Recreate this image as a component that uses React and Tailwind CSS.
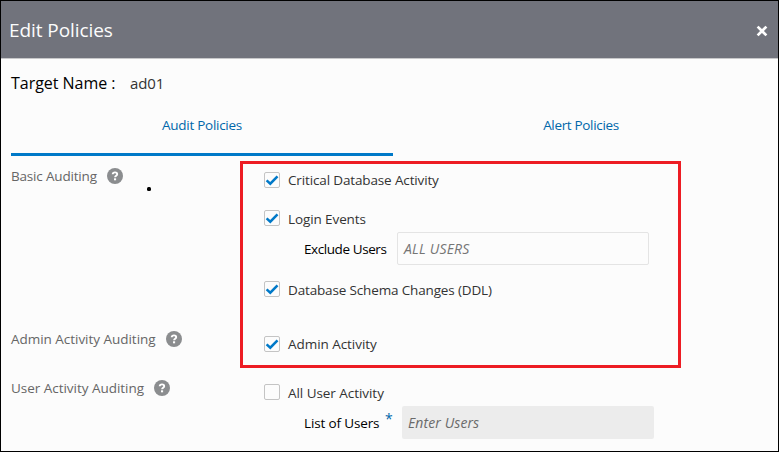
import React from "react";

function HelpIcon() {
  return (
    <svg className="h-4 w-4 shrink-0" viewBox="0 0 16 16" fill="none" aria-label="Help">
      <circle cx="8" cy="8" r="8" fill="#8b8d8f" />
      <path d="M5.7 6.3C5.8 5 6.7 4.4 8 4.4c1.3 0 2.2.7 2.2 1.8 0 1.6-2.1 1.5-2.1 3" stroke="#fff" strokeWidth="1.9" />
      <rect x="7" y="10.3" width="2.1" height="2" fill="#fff" />
    </svg>
  );
}

function Checkbox({ checked }) {
  return (
    <span className="flex h-4 w-4 shrink-0 items-center justify-center rounded-[2px] border border-[#c4c4c4] bg-[#fcfcfc]">
      {checked && (
        <svg className="h-[14px] w-[14px]" viewBox="0 0 14 14" fill="none">
          <path d="M1.6 7.3 5.3 10.7 12.5 3.3" stroke="#0079c8" strokeWidth="2.5" />
        </svg>
      )}
    </span>
  );
}

function Option({ checked, children, className = "" }) {
  return (
    <label className="flex h-4 items-center gap-2">
      <Checkbox checked={checked} />
      <span className={`whitespace-nowrap text-[13.5px] leading-4 text-[#333333] ${className}`}>{children}</span>
    </label>
  );
}

function SectionLabel({ children, className }) {
  return (
    <div className="flex h-4 w-[253px] shrink-0 items-center text-[13.5px] leading-4 text-[#666666]">
      <span className={`shrink-0 whitespace-nowrap ${className}`}>{children}</span>
      <HelpIcon />
    </div>
  );
}

export default function App() {
  return (
    <div className="relative h-[452px] w-[779px] overflow-hidden border border-black bg-[#fcfcfc] font-['Open_Sans','Noto_Sans',sans-serif]">
      <header className="flex h-[58px] items-center justify-between border-b border-[#c8c8ca] bg-[#71737c] pr-[10px] pl-2">
        <h1 className="text-[19px] leading-6 tracking-[-0.08px] text-[#fcfcfc]">Edit Policies</h1>
        <svg className="mt-[3px] h-3 w-3" viewBox="0 0 12 12" fill="none">
          <path d="M1.6 1.6 10.4 10.4M10.4 1.6 1.6 10.4" stroke="#fff" strokeWidth="2.7" />
        </svg>
      </header>

      <div className="flex h-12 items-center pl-[10px] text-[16px] leading-6">
        <span className="w-[119px] whitespace-nowrap tracking-[-0.03px] text-black">Target Name :</span>
        <span className="text-[15px] tracking-[-0.1px] text-[#333333]">ad01</span>
      </div>

      <nav className="flex h-[49px] pl-[10px] text-center text-[13.5px] text-[#0067aa]">
        <div className="w-[382px] border-b-[3px] border-[#0079c8] pt-[8px] leading-5 tracking-[-0.27px]">Audit Policies</div>
        <div className="w-[376px] pt-[8px] leading-5 tracking-[-0.33px]">Alert Policies</div>
      </nav>

      <main className="pl-[10px]">
        <section className="flex h-[175px] pt-3">
          <SectionLabel className="w-24 tracking-[-0.18px]">Basic Auditing</SectionLabel>
          <div className="pt-1">
            <Option checked className="tracking-[-0.14px]">Critical Database Activity</Option>
            <div className="pt-[22px]">
              <Option checked className="pt-0.5 tracking-[-0.1px]">Login Events</Option>
            </div>
            <div className="mt-[6px] flex h-[33px] items-center pl-10">
              <span className="w-[93px] whitespace-nowrap pt-0.5 text-[13.5px] tracking-[-0.42px] text-black">Exclude Users</span>
              <div className="flex h-[33px] w-[252px] items-center rounded-[2px] border border-[#e4e4e4] pl-[6px] text-[14px] tracking-[0.2px] text-[#757575] italic">ALL USERS</div>
            </div>
            <div className="pt-4">
              <Option checked className="pt-0.5 tracking-[-0.15px]">Database Schema Changes (DDL)</Option>
            </div>
          </div>
        </section>

        <section className="flex h-[49px]">
          <SectionLabel className="w-[155px] tracking-[-0.03px]">Admin Activity Auditing</SectionLabel>
          <div className="pt-[5px]">
            <Option checked className="tracking-[-0.05px]">Admin Activity</Option>
          </div>
        </section>

        <section className="flex">
          <SectionLabel className="w-[143px] tracking-[-0.03px]">User Activity Auditing</SectionLabel>
          <div className="pt-1">
            <Option className="pt-0.5 tracking-[-0.05px]">All User Activity</Option>
            <div className="mt-[6px] flex h-[33px] items-center pl-10">
              <span className="w-[81px] whitespace-nowrap pt-0.5 text-[13.5px] tracking-[-0.14px] text-black">List of Users</span>
              <span className="-mt-[7px] w-[17px] text-[14px] leading-4 text-[#0067aa]">*</span>
              <div className="flex h-[33px] w-[252px] items-center rounded-[2px] bg-[#ececec] pl-[6px] text-[14px] tracking-[0.1px] text-[#6a6a6a] italic">Enter Users</div>
            </div>
          </div>
        </section>
      </main>

      <div className="absolute top-[160px] left-[239px] h-[207px] w-[441px] border-[3px] border-[#ed1c24]" />
      <div className="absolute top-[186px] left-[146px] h-1 w-1 rounded-[1.5px] bg-black" />
    </div>
  );
}
